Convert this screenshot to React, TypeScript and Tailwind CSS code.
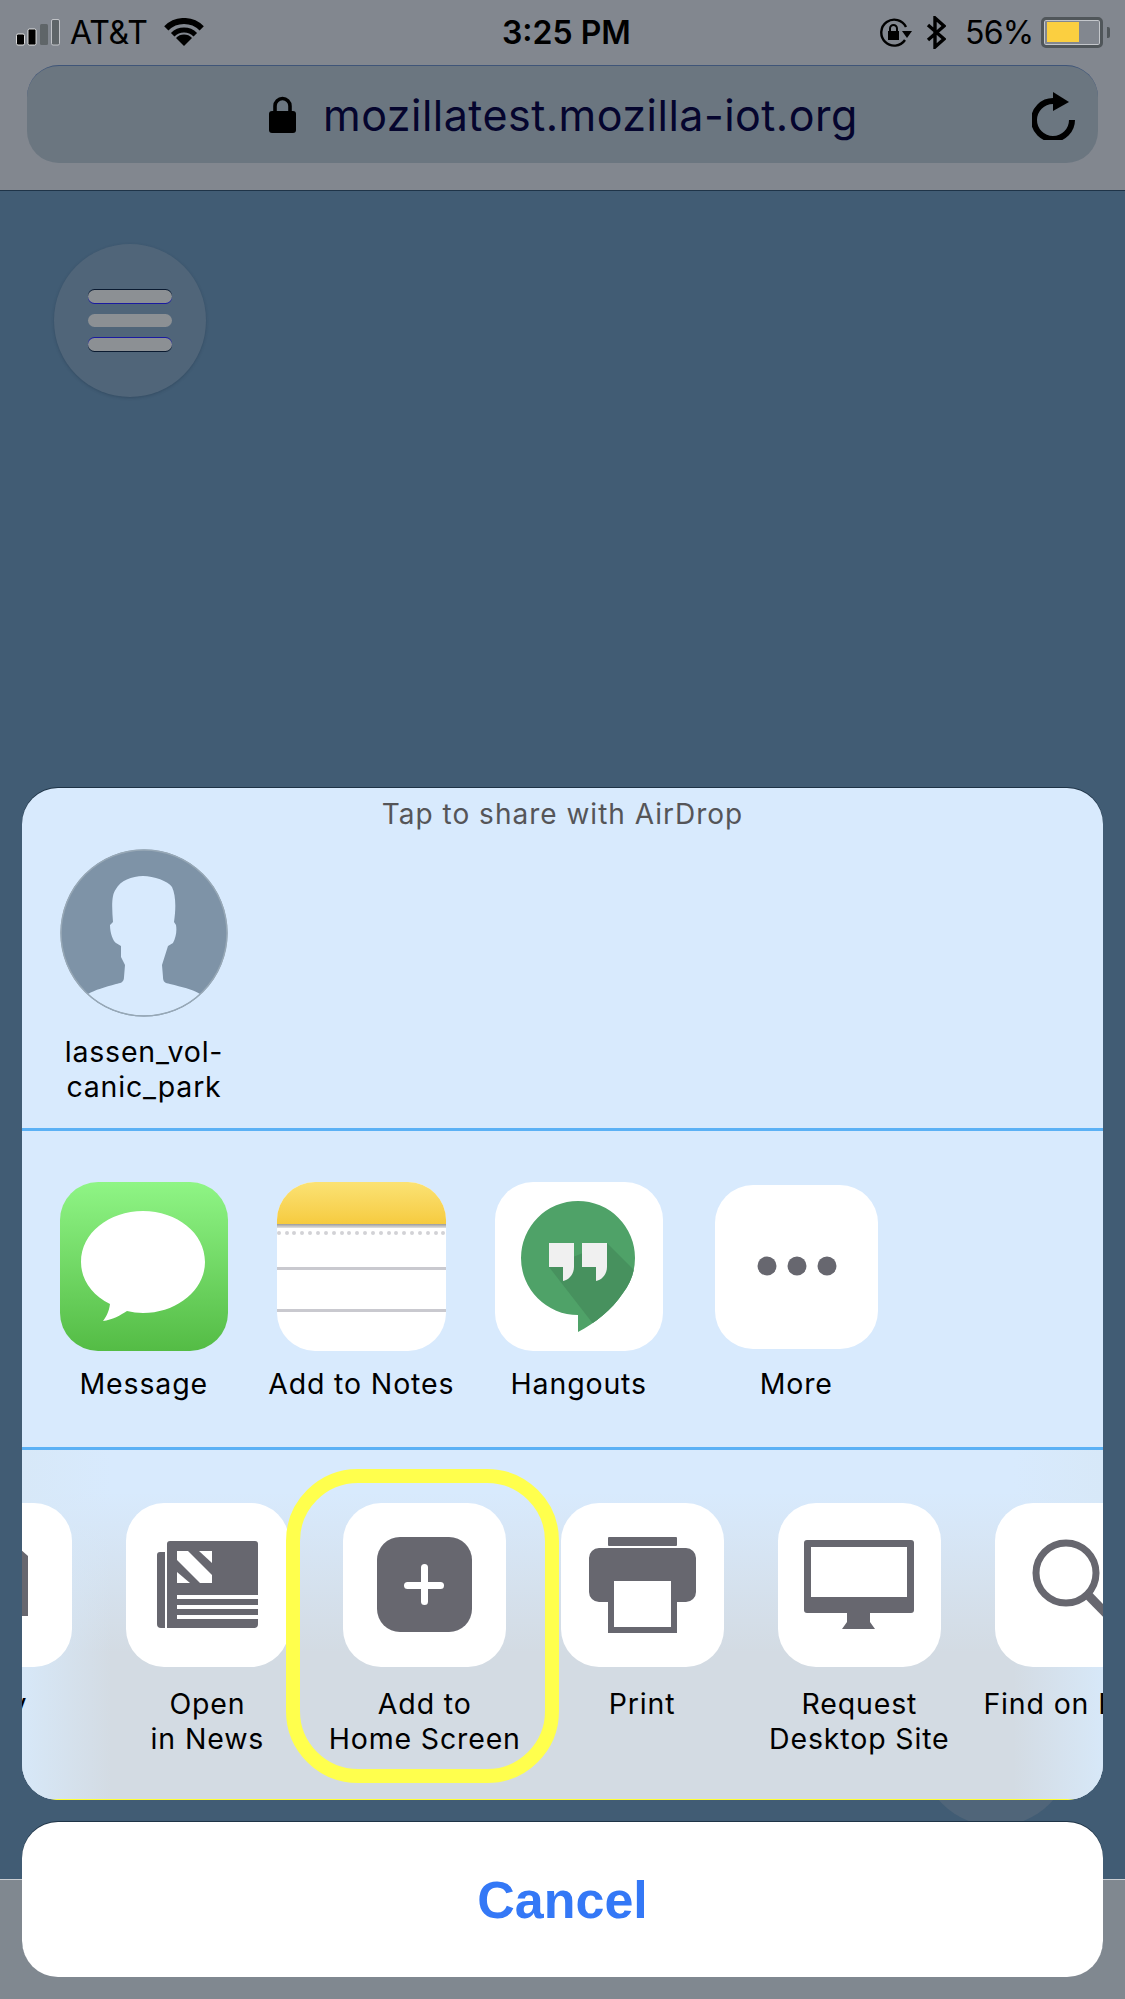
import React from 'react';

const GRAY = '#67676f';

function Squircle({ children, size = 'w-[163px] h-[164px]' }: { children?: React.ReactNode; size?: string }) {
  return <div className={`${size} rounded-[38px] bg-white overflow-hidden shrink-0`}>{children}</div>;
}

function Signal() {
  return (
    <svg width="46" height="28" viewBox="0 0 46 28" className="shrink-0">
      <rect x="0.5" y="15" width="8" height="11" rx="1.5" fill="#000" stroke="#fff" strokeWidth="0.8" />
      <rect x="12" y="10" width="8" height="16" rx="1.5" fill="#000" stroke="#fff" strokeWidth="0.8" />
      <rect x="24" y="5" width="8" height="21" rx="1.5" fill="#5f6568" />
      <rect x="35.5" y="0.5" width="8" height="25.5" rx="1.5" fill="#5f6568" stroke="#d5d7da" strokeWidth="0.8" />
    </svg>
  );
}

function Wifi() {
  return (
    <svg width="40" height="29" viewBox="0 0 40 29" className="shrink-0">
      <path d="M2.3 10.3A25 25 0 0 1 37.7 10.3" fill="none" stroke="#000" strokeWidth="6" />
      <path d="M8.7 16.7A16 16 0 0 1 31.3 16.7" fill="none" stroke="#000" strokeWidth="5" />
      <path d="M20 28L12 20A11 11 0 0 1 28 20Z" fill="#000" />
    </svg>
  );
}

function RotationLock() {
  return (
    <svg width="34" height="30" viewBox="0 0 34 30" className="shrink-0">
      <path d="M26 22A13 13 0 1 1 27 9" fill="none" stroke="#000" strokeWidth="2.4" />
      <path d="M23 13H33L28 20Z" fill="#000" />
      <rect x="9" y="13" width="11" height="9" fill="#000" />
      <path d="M11 13V10.5A3.5 3.5 0 0 1 18 10.5V13" fill="none" stroke="#000" strokeWidth="2" />
    </svg>
  );
}

function Bluetooth() {
  return (
    <svg width="20" height="33" viewBox="0 0 20 33" className="shrink-0">
      <path d="M2 9L18 23L9 31V2L18 10L2 24" fill="none" stroke="#000" strokeWidth="3.4" />
    </svg>
  );
}

function Battery() {
  return (
    <div className="flex items-center shrink-0">
      <div className="w-[62px] h-[31px] rounded-[5px] border-[3px] border-[#50565a] p-[2px] shadow-[inset_0_0_0_1px_#c4c7cb]">
        <div className="w-[32px] h-[20px] ml-[1px] bg-[#fbcf40]" />
      </div>
      <div className="w-[3px] h-[11px] ml-[4px] rounded-r-[2px] bg-[#50565a]" />
    </div>
  );
}

function Lock() {
  return (
    <svg width="27" height="37" viewBox="0 0 27 37" className="shrink-0">
      <path d="M6 17V10A7.5 7.5 0 0 1 21 10V17" fill="none" stroke="#000" strokeWidth="3.6" />
      <rect x="0" y="15" width="27" height="22" rx="3" fill="#000" />
    </svg>
  );
}

function Reload() {
  return (
    <svg width="44" height="50" viewBox="0 0 44 50" className="shrink-0">
      <path d="M21 11A19 19 0 1 0 40 30" fill="none" stroke="#000" strokeWidth="6" />
      <path d="M21 2L37 12L21 21Z" fill="#000" />
    </svg>
  );
}

function Avatar() {
  return (
    <svg width="168" height="168" viewBox="0 0 168 168" className="shrink-0">
      <circle cx="84" cy="84" r="83.5" fill="#7e93a7" />
      <path
        d="M83 27C72 27 60 32 56 40C51 46 52 60 53 73L50 76C50 84 53 92 56 94L61 97L61 108L65 116L64 128C64 134 60 134 56 135C45 138 35 141 28 145A83.5 83.5 0 0 0 140 145C132 140 122 138 110 135C105 134 103 133 103 128L102 116L108 97L113 94C116 88 117 82 116 76L114 73C116 60 116 46 112 38C108 32 94 27 83 27Z"
        fill="#d8eafd"
      />
      <circle cx="84" cy="84" r="83" fill="none" stroke="#97a8b6" strokeWidth="1.5" />
    </svg>
  );
}

function MessageIcon() {
  return (
    <div className="w-[168px] h-[169px] rounded-[38px] overflow-hidden bg-gradient-to-b from-[#8ff585] to-[#54bc45] shrink-0">
      <svg width="168" height="169" viewBox="0 0 168 169">
        <path
          d="M83 29C49 29 21 51 21 80C21 98 32 113 50 122C49 130 46 135 43 139C52 138 61 133 67 129C72 130 78 131 83 131C117 131 145 108 145 80C145 51 117 29 83 29Z"
          fill="#fff"
        />
      </svg>
    </div>
  );
}

function NotesIcon() {
  return (
    <div className="w-[169px] h-[169px] rounded-[38px] overflow-hidden bg-white shrink-0 flex flex-col">
      <div className="h-[42px] bg-gradient-to-b from-[#fbe273] to-[#f6cb3e]" />
      <div className="h-[4px] bg-gradient-to-b from-[#9b9b9b] to-[#e4e4e4]" />
      <div className="flex justify-between mt-[3px] overflow-hidden">
        {Array.from({ length: 22 }).map((_, i) => (
          <div key={i} className="w-[4px] h-[4px] rounded-full bg-[#d2d2d6] shrink-0" />
        ))}
      </div>
      <div className="h-[3px] mt-[32px] bg-[#c9c9cf]" />
      <div className="h-[3px] mt-[39px] bg-[#c9c9cf]" />
    </div>
  );
}

function HangoutsIcon() {
  return (
    <Squircle size="w-[168px] h-[169px]">
      <svg width="168" height="169" viewBox="0 0 168 169">
        <defs>
          <clipPath id="hangouts-bubble">
            <circle cx="83" cy="76" r="57" />
            <path d="M83 125V150C104 139 124 122 134 100Z" />
          </clipPath>
        </defs>
        <g clipPath="url(#hangouts-bubble)">
          <rect x="0" y="0" width="168" height="169" fill="#4fa268" />
          <path d="M54 85L112 61L170 119L120 170Z" fill="#47915e" />
        </g>
        <path d="M54 61H79V85C79 92 74 98 68 99V85H54Z" fill="#f0f0f0" />
        <path d="M87 61H112V85C112 92 107 98 101 99V85H87Z" fill="#f0f0f0" />
      </svg>
    </Squircle>
  );
}

function MoreIcon() {
  return (
    <Squircle>
      <svg width="163" height="164" viewBox="0 0 163 164">
        <circle cx="52" cy="81" r="9.5" fill={GRAY} />
        <circle cx="82" cy="81" r="9.5" fill={GRAY} />
        <circle cx="112" cy="81" r="9.5" fill={GRAY} />
      </svg>
    </Squircle>
  );
}

function CopyIcon() {
  return (
    <Squircle>
      <svg width="163" height="164" viewBox="0 0 163 164">
        <path d="M112 47L119 53H112Z" fill={GRAY} />
        <rect x="80" y="53" width="39" height="60" fill={GRAY} />
      </svg>
    </Squircle>
  );
}

function NewsIcon() {
  return (
    <Squircle>
      <svg width="163" height="164" viewBox="0 0 163 164">
        <path d="M31 52A3 3 0 0 1 34 49H39V125H35A4 4 0 0 1 31 121Z" fill={GRAY} />
        <path d="M41 41A3 3 0 0 1 44 38H129A3 3 0 0 1 132 41V121A4 4 0 0 1 128 125H41Z" fill={GRAY} />
        <path d="M51 48H62L86 72V80H74L51 57Z" fill="#fff" />
        <path d="M73 48H86V60Z" fill="#fff" />
        <path d="M51 69L64 80H51Z" fill="#fff" />
        <rect x="51" y="92" width="81" height="4" fill="#fff" />
        <rect x="51" y="102" width="81" height="4" fill="#fff" />
        <rect x="51" y="112" width="81" height="4" fill="#fff" />
      </svg>
    </Squircle>
  );
}

function AddHomeIcon() {
  return (
    <Squircle>
      <svg width="163" height="164" viewBox="0 0 163 164">
        <rect x="34" y="34" width="95" height="95" rx="23" fill={GRAY} />
        <rect x="61" y="79" width="40" height="7" rx="3.5" fill="#fff" />
        <rect x="78" y="61" width="7" height="41" rx="3.5" fill="#fff" />
      </svg>
    </Squircle>
  );
}

function PrintIcon() {
  return (
    <Squircle>
      <svg width="163" height="164" viewBox="0 0 163 164">
        <rect x="47" y="34" width="69" height="9" rx="1" fill={GRAY} />
        <path d="M38 45H125A10 10 0 0 1 135 55V89A10 10 0 0 1 125 99H116V130H47V99H38A10 10 0 0 1 28 89V55A10 10 0 0 1 38 45Z" fill={GRAY} />
        <rect x="53" y="78" width="57" height="46" fill="#fff" />
      </svg>
    </Squircle>
  );
}

function DesktopIcon() {
  return (
    <Squircle>
      <svg width="163" height="164" viewBox="0 0 163 164">
        <rect x="26" y="37" width="110" height="73" rx="3" fill={GRAY} />
        <rect x="33" y="44" width="96" height="50" fill="#fff" />
        <path d="M69 110H92V119L97 126H64L69 119Z" fill={GRAY} />
      </svg>
    </Squircle>
  );
}

function FindIcon() {
  return (
    <Squircle>
      <svg width="163" height="164" viewBox="0 0 163 164">
        <circle cx="71" cy="70" r="30" fill="none" stroke={GRAY} strokeWidth="7" />
        <path d="M93 92L130 130" stroke={GRAY} strokeWidth="9" />
      </svg>
    </Squircle>
  );
}

const appRow = [
  { icon: <MessageIcon />, label: 'Message' },
  { icon: <NotesIcon />, label: 'Add to Notes' },
  { icon: <HangoutsIcon />, label: 'Hangouts' },
  { icon: <MoreIcon />, label: 'More' },
];

const actionRow = [
  { icon: <CopyIcon />, lines: ['Copy'] },
  { icon: <NewsIcon />, lines: ['Open', 'in News'] },
  { icon: <AddHomeIcon />, lines: ['Add to', 'Home Screen'] },
  { icon: <PrintIcon />, lines: ['Print'] },
  { icon: <DesktopIcon />, lines: ['Request', 'Desktop Site'] },
  { icon: <FindIcon />, lines: ['Find on Page'] },
];

export default function App() {
  return (
    <div className="relative w-[1125px] h-[1999px] overflow-hidden bg-[#415c74] font-['Inter','Liberation_Sans',sans-serif] text-black">
      {/* Toolbar that sits behind the cancel button */}
      <div className="absolute left-0 right-0 bottom-0 h-[120px] bg-[#808890] border-t border-[#c9cdd2]" />
      {/* Second round button hidden behind the sheet */}
      <div className="absolute left-[920px] top-[1674px] w-[152px] h-[152px] rounded-full bg-[#506579]" />

      <div className="relative flex flex-col">
        {/* Browser chrome */}
        <div className="h-[191px] bg-[#82878f] border-b border-[#1f3448]">
          <div className="h-[65px] flex items-center">
            <div className="w-[502px] pl-[16px] flex items-center">
              <div className="mt-[1px]"><Signal /></div>
              <span className="ml-[8px] text-[32px] leading-[36px] tracking-[-0.2px]">AT&amp;T</span>
              <div className="ml-[16px]"><Wifi /></div>
            </div>
            <span className="w-[128px] text-[32px] leading-[36px] font-semibold whitespace-nowrap">3:25 PM</span>
            <div className="flex items-center pl-[249px]">
              <RotationLock />
              <div className="ml-[13px]"><Bluetooth /></div>
              <span className="ml-[19px] w-[66px] text-[32px] leading-[36px] whitespace-nowrap tracking-[-0.8px]">56%</span>
              <div className="ml-[10px]"><Battery /></div>
            </div>
          </div>
          <div className="mx-[27px] h-[98px] rounded-[32px] bg-[#6b7680] border-t border-[#3f5578] flex items-center pl-[242px] pr-[22px]">
            <Lock />
            <span className="ml-[27px] text-[43px] leading-[50px] tracking-[0.48px] text-[#05052e] whitespace-nowrap">mozillatest.mozilla-iot.org</span>
            <div className="ml-auto"><Reload /></div>
          </div>
        </div>

        {/* Menu button */}
        <div className="mt-[53px] ml-[54px] w-[152px] h-[153px] rounded-full bg-[#506579] shadow-[0_1px_3px_rgba(30,50,70,0.35)] flex flex-col items-center justify-center gap-[11px]">
          <div className="w-[84px] h-[13px] rounded-full bg-[#8c9094] shadow-[0_-1px_0_#0a1a30,0_1px_0_#1a1aa0]" />
          <div className="w-[84px] h-[13px] rounded-full bg-[#8c9094]" />
          <div className="w-[84px] h-[13px] rounded-full bg-[#8c9094] shadow-[0_-1px_0_#1a1aa0,0_1px_0_#0a1a30]" />
        </div>

        {/* Share sheet */}
        <div className="mt-[391px] mx-[22px] h-[1012px] rounded-[36px] overflow-hidden bg-[#d8eafd] shadow-[0_-1px_0_#1e3346] flex flex-col">
          <div className="h-[340px] shrink-0">
            <p className="mt-[8px] text-center text-[28px] leading-[36px] tracking-[1px] text-[#555558]">Tap to share with AirDrop</p>
            <div className="mt-[17px] ml-[38px]"><Avatar /></div>
            <p className="mt-[17px] ml-[26px] w-[192px] text-center text-[28.5px] leading-[35px] tracking-[0.8px]">
              lassen_vol-
              <br />
              canic_park
            </p>
          </div>
          <div className="h-[3px] shrink-0 bg-[#5bb1f5]" />
          <div className="h-[316px] shrink-0 pt-[51px] pl-[13px] flex">
            {appRow.map((app) => (
              <div key={app.label} className="w-[217.5px] shrink-0 flex flex-col items-center">
                <div className="h-[169px] flex items-center">{app.icon}</div>
                <span className="mt-[15px] text-[28.5px] leading-[35px] tracking-[0.85px] whitespace-nowrap">{app.label}</span>
              </div>
            ))}
          </div>
          <div className="h-[3px] shrink-0 bg-[#5bb1f5]" />
          <div className="relative flex-1 pt-[53px] flex bg-[linear-gradient(to_right,#d7e8f8,transparent_90px,transparent_calc(100%-90px),#d7e8f8),linear-gradient(to_bottom,#d8eafd_12%,#d3dbe3_58%)] border-b border-[#ffff33]">
            <div className="flex ml-[-140.5px]">
              {actionRow.map((action) => (
                <div key={action.lines[0]} className="w-[217.3px] shrink-0 flex flex-col items-center">
                  {action.icon}
                  <div className="mt-[19px] text-center text-[28.5px] leading-[35px] tracking-[0.85px] whitespace-nowrap">
                    {action.lines.map((line) => (
                      <div key={line}>{line}</div>
                    ))}
                  </div>
                </div>
              ))}
            </div>
            {/* Highlight drawn around Add to Home Screen */}
            <div className="absolute left-[264px] top-[19px] w-[273px] h-[314px] rounded-[72px] border-[14px] border-[#ffff4d]" />
          </div>
        </div>

        {/* Cancel */}
        <div className="mt-[22px] mx-[22px] h-[155px] rounded-[36px] bg-white shadow-[0_-1px_0_#1e3346] flex items-center justify-center">
          <span className="text-[52px] leading-[60px] font-bold text-[#3478f6] font-['Liberation_Sans',sans-serif]">Cancel</span>
        </div>
      </div>
    </div>
  );
}
